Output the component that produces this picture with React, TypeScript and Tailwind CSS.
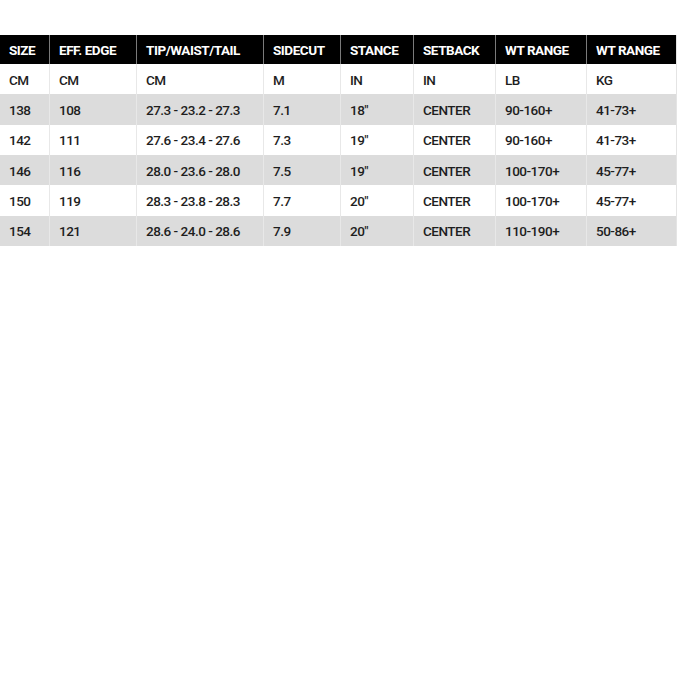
import React from "react";

const headers = ["SIZE", "EFF. EDGE", "TIP/WAIST/TAIL", "SIDECUT", "STANCE", "SETBACK", "WT RANGE", "WT RANGE"];
const rows = [
  ["CM", "CM", "CM", "M", "IN", "IN", "LB", "KG"],
  ["138", "108", "27.3 - 23.2 - 27.3", "7.1", "18\"", "CENTER", "90-160+", "41-73+"],
  ["142", "111", "27.6 - 23.4 - 27.6", "7.3", "19\"", "CENTER", "90-160+", "41-73+"],
  ["146", "116", "28.0 - 23.6 - 28.0", "7.5", "19\"", "CENTER", "100-170+", "45-77+"],
  ["150", "119", "28.3 - 23.8 - 28.3", "7.7", "20\"", "CENTER", "100-170+", "45-77+"],
  ["154", "121", "28.6 - 24.0 - 28.6", "7.9", "20\"", "CENTER", "110-190+", "50-86+"],
];

export default function App() {
  return (
    <div
      className="w-[680px] h-[680px] bg-white pt-[35px]"
      style={{ fontFamily: 'Roboto, "Liberation Sans", Arial, sans-serif' }}
    >
      <div className="w-[677px] border-r border-[#e4e4e4]">
        <div className="grid grid-cols-[49px_87px_127px_77px_73px_82px_91px_91px] h-[29px] bg-black">
          {headers.map((h, i) => (
            <div
              key={i}
              className={`flex items-center pl-[9px] pt-px text-[13.5px] font-bold text-white tracking-[-0.45px] ${i > 0 ? "border-l border-[#7a7a7a]" : ""}`}
            >
              {h}
            </div>
          ))}
        </div>
        {rows.map((r, ri) => (
          <div
            key={ri}
            className={`grid grid-cols-[49px_87px_127px_77px_73px_82px_91px_91px] h-[30.33px] ${ri % 2 === 1 ? "bg-[#dcdcdc]" : "bg-white"}`}
          >
            {r.map((c, ci) => (
              <div
                key={ci}
                className={`flex items-center pl-[9px] pt-px text-[13.5px] font-medium text-[#1e1e1e] tracking-[-0.5px] ${ci > 0 ? "border-l border-[#e8e8e8]" : ""}`}
              >
                {c}
              </div>
            ))}
          </div>
        ))}
      </div>
    </div>
  );
}
